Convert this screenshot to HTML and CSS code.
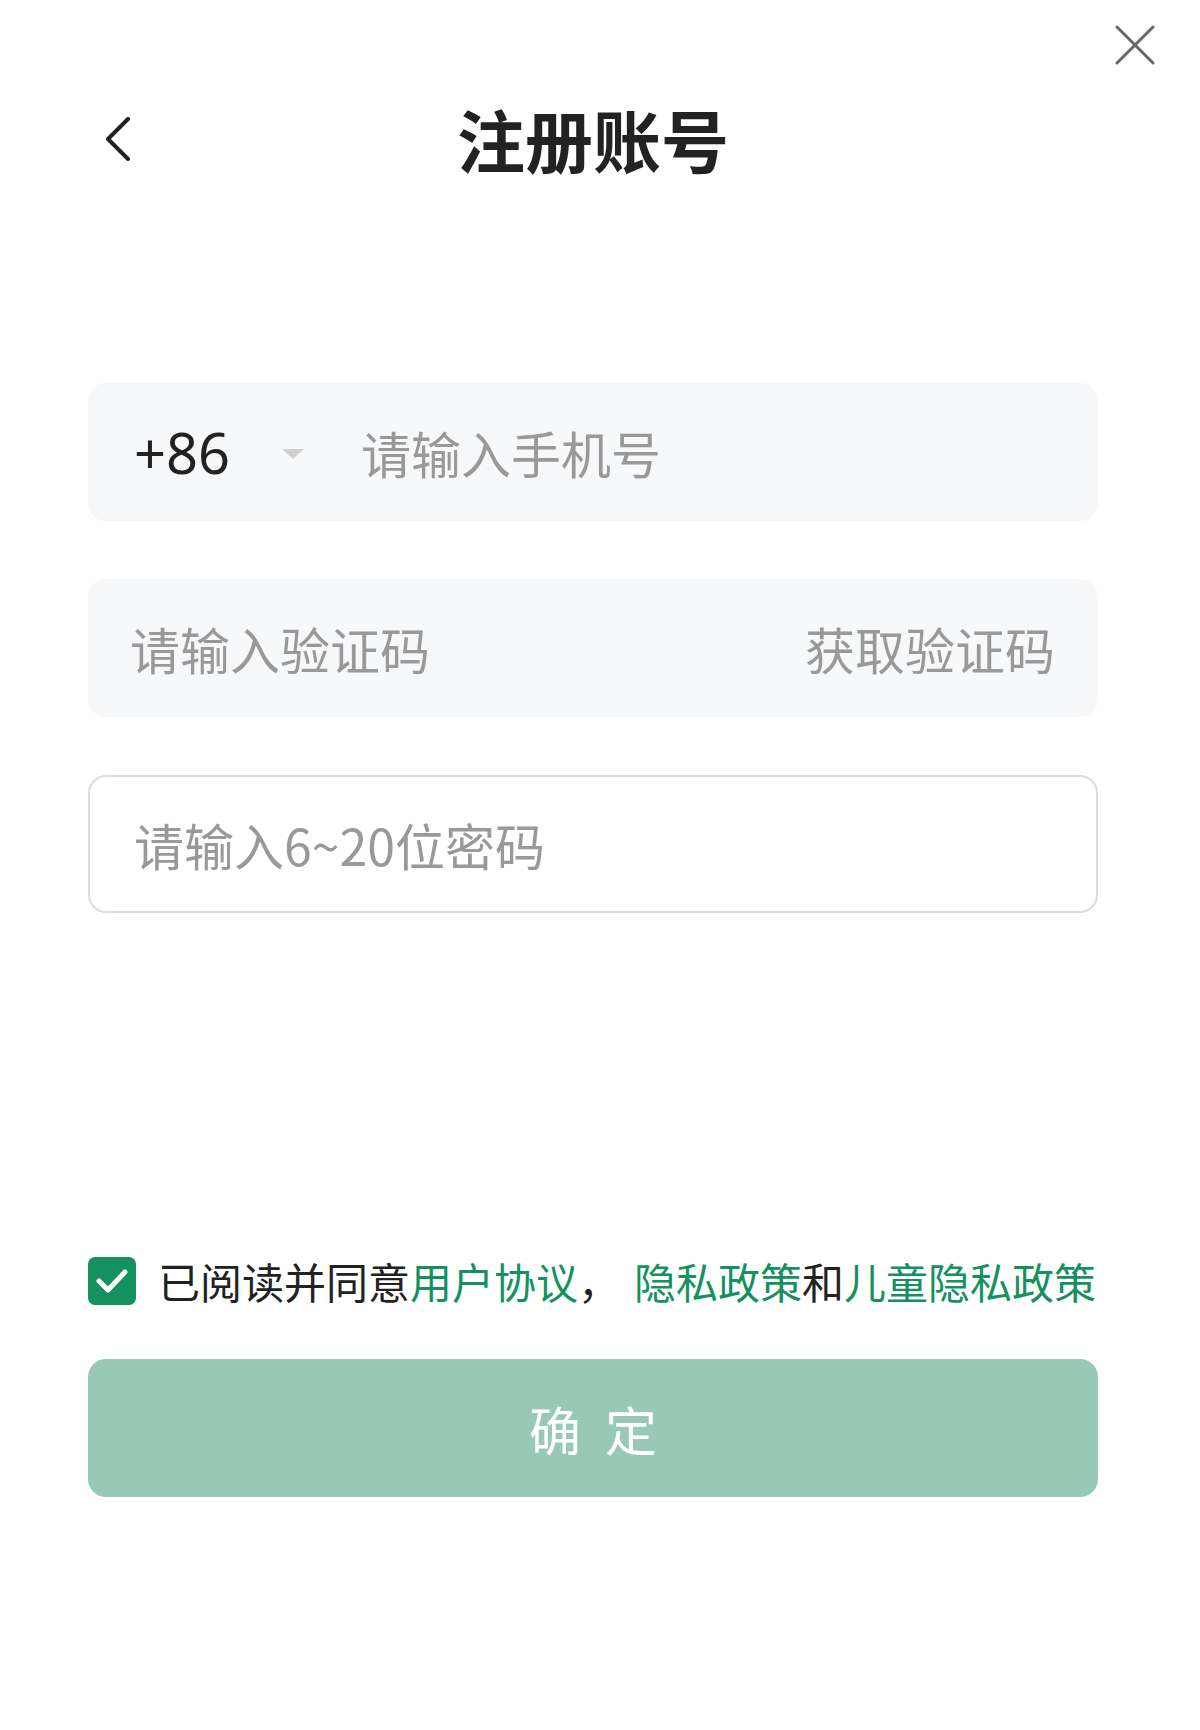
FILE: index.html
```html
<!DOCTYPE html>
<html lang="zh-CN">
<head>
    <meta charset="UTF-8">
    <meta name="viewport" content="width=device-width, initial-scale=1.0">
    <title>注册账号</title>
    <link rel="stylesheet" href="styles.css">
</head>
<body>
    <div class="top-bar">
        <button class="icon-btn close-btn" type="button" aria-label="关闭">
            <svg width="40" height="40" viewBox="0 0 40 40"><path d="M2 2 L38 38 M38 2 L2 38" stroke="#666" stroke-width="3" fill="none" stroke-linecap="round"/></svg>
        </button>
    </div>

    <div class="page">
        <div class="header">
            <button class="icon-btn back-btn" type="button" aria-label="返回">
                <svg width="26" height="44" viewBox="0 0 26 44"><path d="M23 2 L3 22 L23 42" stroke="#222" stroke-width="4" fill="none" stroke-linecap="round" stroke-linejoin="round"/></svg>
            </button>
            <h1>注册账号</h1>
            <span></span>
        </div>

        <form class="register-form">
            <div class="field field-fill">
                <span class="area-code">+86</span>
                <span class="caret"></span>
                <input type="tel" class="phone-input" placeholder="请输入手机号">
            </div>

            <div class="field field-fill">
                <input type="text" placeholder="请输入验证码">
                <span class="get-code">获取验证码</span>
            </div>

            <div class="field field-line">
                <input type="password" placeholder="请输入6~20位密码">
            </div>

            <div class="agree">
                <span class="checkbox">
                    <svg width="48" height="48" viewBox="0 0 48 48"><path d="M11 24 L20 33 L37 15" stroke="#fff" stroke-width="5" fill="none" stroke-linecap="round" stroke-linejoin="round"/></svg>
                </span>
                <p>已阅读并同意<a href="#">用户协议</a>，<a href="#" class="gap">隐私政策</a>和<a href="#">儿童隐私政策</a></p>
            </div>

            <button type="submit" class="submit-btn">确定</button>
        </form>
    </div>
</body>
</html>
```

FILE: styles.css
```css
body {
    margin: 0;
    background: #fff;
    font-family: "Noto Sans CJK SC", "Noto Sans", sans-serif;
    color: #222;
}
.icon-btn {
    background: none;
    border: none;
    padding: 0;
    cursor: pointer;
    display: flex;
}
.top-bar {
    display: flex;
    justify-content: flex-end;
    padding: 25px 45px 0 0;
    height: 40px;
}
.page {
    width: 1010px;
    margin-left: 88px;
}
.header {
    display: grid;
    grid-template-columns: 1fr auto 1fr;
    align-items: center;
    margin-top: 40px;
    height: 68px;
}
.back-btn {
    margin-left: 17px;
}
.header h1 {
    margin: 0;
    font-size: 68px;
    line-height: 68px;
    font-weight: 700;
    color: #222;
}
.register-form {
    margin-top: 210px;
}
.field {
    height: 138px;
    box-sizing: border-box;
    border-radius: 18px;
    display: flex;
    align-items: center;
    margin-bottom: 58px;
}
.field-fill {
    background: #f7f8fa;
    padding: 0 43px 0 42px;
}
.field-line {
    border: 2px solid #dcdcdc;
    padding: 0 44px;
}
.field input {
    flex: 1;
    min-width: 0;
    border: none;
    outline: none;
    background: transparent;
    font-family: inherit;
    font-size: 50px;
    color: #222;
    padding: 0;
}
.field input::placeholder {
    color: #999;
}
.area-code {
    font-family: "Noto Sans", "Noto Sans CJK SC", sans-serif;
    font-size: 56px;
    color: #222;
    margin-left: 4px;
}
.caret {
    width: 0;
    height: 0;
    border-left: 11px solid transparent;
    border-right: 11px solid transparent;
    border-top: 10px solid #cfcfcf;
    margin: 4px 57px 0 52px;
}
.get-code {
    font-size: 50px;
    color: #999;
}
.agree {
    display: flex;
    align-items: center;
    margin-top: 344px;
}
.checkbox {
    width: 48px;
    height: 48px;
    border-radius: 7px;
    background: #14915f;
    display: flex;
    flex-shrink: 0;
}
.agree p {
    margin: 0 0 0 22px;
    font-size: 42px;
    line-height: 48px;
    color: #222;
    white-space: nowrap;
}
.agree a {
    color: #14915f;
    text-decoration: none;
}
.agree a.gap {
    margin-left: 14px;
}
.submit-btn {
    display: block;
    width: 100%;
    height: 138px;
    margin-top: 54px;
    border: none;
    border-radius: 18px;
    background: #98c8b6;
    color: #fff;
    font-family: inherit;
    font-size: 52px;
    letter-spacing: 24px;
    text-indent: 24px;
    cursor: pointer;
}
```
